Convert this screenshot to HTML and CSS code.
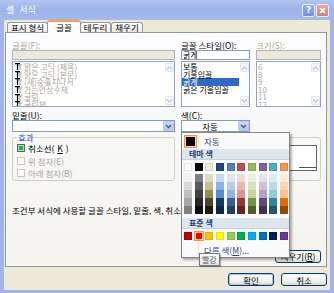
FILE: index.html
```html
<!DOCTYPE html>
<html>
<head>
    <meta charset="utf-8">
    <title>셀 서식</title>
    <link rel="stylesheet" href="styles.css">
</head>
<body>
    <div class="window">
        <div class="titlebar">
            <span class="title">셀 서식</span>
            <span class="tb-btn help">?</span>
            <span class="tb-btn close">
                <svg width="7" height="7" viewBox="0 0 7 7"><path d="M1,1 L6,6 M6,1 L1,6" stroke="#fff" stroke-width="1.6" /></svg>
            </span>
        </div>

        <div class="frame">
            <div class="tabs">
                <div class="tab">표시 형식</div>
                <div class="tab active">글꼴</div>
                <div class="tab">테두리</div>
                <div class="tab">채우기</div>
            </div>

            <div class="panel">
                <div class="fields">
                    <div class="label off">글꼴(F):</div>
                    <div class="label">글꼴 스타일(<u>O</u>):</div>
                    <div class="label off">크기(S):</div>

                    <div class="textbox off"></div>
                    <div class="textbox">굵게</div>
                    <div class="textbox off"></div>

                    <!-- font list (disabled) -->
                    <div class="listbox">
                        <div class="items off fonts">
                            <div class="item"><svg class="tt" width="7" height="7" viewBox="0 0 7 7"><path d="M3,1.5 h4 v1 h-1.5 v4.5 h-1 v-4.5 h-1.5z" fill="#9a9a9a" /><path d="M0,0 h5 v1.2 h-1.9 v5.8 h-1.2 v-5.8 h-1.9z" fill="#000" /></svg>맑은 고딕 (제목)</div>
                            <div class="item"><svg class="tt" width="7" height="7" viewBox="0 0 7 7"><path d="M3,1.5 h4 v1 h-1.5 v4.5 h-1 v-4.5 h-1.5z" fill="#9a9a9a" /><path d="M0,0 h5 v1.2 h-1.9 v5.8 h-1.2 v-5.8 h-1.9z" fill="#000" /></svg>맑은 고딕 (본문)</div>
                            <div class="item"><svg class="tt" width="7" height="7" viewBox="0 0 7 7"><path d="M3,1.5 h4 v1 h-1.5 v4.5 h-1 v-4.5 h-1.5z" fill="#9a9a9a" /><path d="M0,0 h5 v1.2 h-1.9 v5.8 h-1.2 v-5.8 h-1.9z" fill="#000" /></svg>(새)숭홀지나서</div>
                            <div class="item"><svg class="tt" width="7" height="7" viewBox="0 0 7 7"><path d="M3,1.5 h4 v1 h-1.5 v4.5 h-1 v-4.5 h-1.5z" fill="#9a9a9a" /><path d="M0,0 h5 v1.2 h-1.9 v5.8 h-1.2 v-5.8 h-1.9z" fill="#000" /></svg>가는안상수체</div>
                            <div class="item"><svg class="tt" width="7" height="7" viewBox="0 0 7 7"><path d="M3,1.5 h4 v1 h-1.5 v4.5 h-1 v-4.5 h-1.5z" fill="#9a9a9a" /><path d="M0,0 h5 v1.2 h-1.9 v5.8 h-1.2 v-5.8 h-1.9z" fill="#000" /></svg>굴림</div>
                            <div class="item"><svg class="tt" width="7" height="7" viewBox="0 0 7 7"><path d="M3,1.5 h4 v1 h-1.5 v4.5 h-1 v-4.5 h-1.5z" fill="#9a9a9a" /><path d="M0,0 h5 v1.2 h-1.9 v5.8 h-1.2 v-5.8 h-1.9z" fill="#000" /></svg>굴림체</div>
                        </div>
                        <div class="scroll">
                            <span class="sbtn"><svg width="7" height="4" viewBox="0 0 7 4"><path d="M1,3.5 L3.5,1 L6,3.5" stroke="#c3c9d6" stroke-width="1.3" fill="none" /></svg></span>
                            <span class="sbtn"><svg width="7" height="4" viewBox="0 0 7 4"><path d="M1,0.5 L3.5,3 L6,0.5" stroke="#c3c9d6" stroke-width="1.3" fill="none" /></svg></span>
                        </div>
                    </div>

                    <!-- style list -->
                    <div class="listbox">
                        <div class="items">
                            <div class="item">보통</div>
                            <div class="item">기울임꼴</div>
                            <div class="item selected">굵게</div>
                            <div class="item">굵은 기울임꼴</div>
                        </div>
                        <div class="scroll">
                            <span class="sbtn"><svg width="7" height="4" viewBox="0 0 7 4"><path d="M1,3.5 L3.5,1 L6,3.5" stroke="#c3c9d6" stroke-width="1.3" fill="none" /></svg></span>
                            <span class="sbtn"><svg width="7" height="4" viewBox="0 0 7 4"><path d="M1,0.5 L3.5,3 L6,0.5" stroke="#c3c9d6" stroke-width="1.3" fill="none" /></svg></span>
                        </div>
                    </div>

                    <!-- size list (disabled) -->
                    <div class="listbox">
                        <div class="items off">
                            <div class="item">6</div>
                            <div class="item">8</div>
                            <div class="item">9</div>
                            <div class="item">10</div>
                            <div class="item">11</div>
                            <div class="item">12</div>
                        </div>
                        <div class="scroll">
                            <span class="sbtn"><svg width="7" height="4" viewBox="0 0 7 4"><path d="M1,3.5 L3.5,1 L6,3.5" stroke="#c3c9d6" stroke-width="1.3" fill="none" /></svg></span>
                            <span class="sbtn"><svg width="7" height="4" viewBox="0 0 7 4"><path d="M1,0.5 L3.5,3 L6,0.5" stroke="#c3c9d6" stroke-width="1.3" fill="none" /></svg></span>
                        </div>
                    </div>

                    <div class="label gap">밑줄(<u>U</u>):</div>
                    <div class="label gap">색(<u>C</u>):</div>
                    <div></div>

                    <div class="combo">
                        <span class="combo-text"></span>
                        <span class="combo-btn"><svg width="7" height="5" viewBox="0 0 7 5"><path d="M1,1 L3.5,3.5 L6,1" stroke="#4d6185" stroke-width="1.5" fill="none" /></svg></span>
                    </div>
                    <div class="combo">
                        <span class="combo-text">자동</span>
                        <span class="combo-btn"><svg width="7" height="5" viewBox="0 0 7 5"><path d="M1,1 L3.5,3.5 L6,1" stroke="#4d6185" stroke-width="1.5" fill="none" /></svg></span>
                    </div>
                    <div></div>

                    <fieldset class="group">
                        <legend>효과</legend>
                        <div class="check"><span class="box on"><span></span></span>취소선(<u>K</u>)</div>
                        <div class="check off"><span class="box"></span>위 첨자(E)</div>
                        <div class="check off"><span class="box"></span>아래 첨자(B)</div>
                    </fieldset>

                    <fieldset class="group preview-group">
                        <legend>미리 보기</legend>
                        <div class="preview">
                            <span class="preview-line"></span>
                            <span class="preview-text">가나다AaBbCc</span>
                            <span class="preview-line"></span>
                        </div>
                    </fieldset>
                </div>

                <p class="note">조건부 서식에 사용할 글꼴 스타일, 밑줄, 색, 취소선을 설정할 수 있습니다.</p>

                <div class="clear-row">
                    <button class="btn">지우기(<u>R</u>)</button>
                </div>
            </div>

            <div class="buttons">
                <button class="btn default">확인</button>
                <button class="btn">취소</button>
            </div>
        </div>

        <!-- color dropdown -->
        <div class="picker">
            <div class="pk-row">
                <span class="pk-gutter"><span class="auto-swatch"></span></span>
                <span class="pk-label">자동</span>
            </div>
            <div class="pk-head">테마 색</div>
            <div class="pk-grid" id="theme-row"></div>
            <div class="pk-grid shades" id="shade-rows"></div>
            <div class="pk-head second">표준 색</div>
            <div class="pk-grid" id="standard-row"></div>
            <div class="pk-row more">
                <span class="pk-gutter"></span>
                <span class="pk-label">다른 색(<u>M</u>)...</span>
            </div>
        </div>

        <div class="tooltip">빨강</div>
    </div>

    <script src="picker.js"></script>
</body>
</html>
```

FILE: styles.css
```css
* {
    box-sizing: border-box;
}

body {
    margin: 0;
    font-family: "Noto Sans CJK KR", "Noto Sans", sans-serif;
    font-size: 8.5px;
    color: #000;
    background: #fff;
}

.window {
    position: relative;
    width: 334px;
    height: 293px;
}

/* title bar (inactive XP) */
.titlebar {
    height: 20px;
    display: flex;
    align-items: center;
    padding: 0 5px 0 6px;
    background: linear-gradient(#b3c5f0, #9cb4ea 45%, #a5baec);
    color: #fff;
}

.title {
    flex: 1;
    font-size: 9px;
    line-height: 10px;
    word-spacing: 3px;
}

.tb-btn {
    width: 13px;
    height: 13px;
    margin-left: 1px;
    border: 1px solid #e8eefc;
    border-radius: 2px;
    display: flex;
    align-items: center;
    justify-content: center;
}

.help {
    background: linear-gradient(#93aff0, #6b8fe5);
    font-family: "DejaVu Sans", sans-serif;
    font-weight: bold;
    font-size: 9px;
    line-height: 9px;
}

.close {
    background: linear-gradient(#e3aaa2, #cf7f74);
}

.frame {
    height: 273px;
    background: #ece9d8;
    border: 4px solid #a1b4e8;
    border-top: 0;
    border-bottom-width: 3px;
    padding: 0 3px 0 1px;
}

/* tabs */
.tabs {
    display: flex;
    align-items: flex-end;
    height: 12px;
    padding-left: 2px;
}

.tab {
    height: 10px;
    padding: 0 3px;
    border: 1px solid #919b9c;
    border-bottom: 0;
    border-radius: 3px 3px 0 0;
    background: linear-gradient(#fff, #ecebe5);
    line-height: 9px;
    white-space: nowrap;
}

.tab.active {
    position: relative;
    z-index: 1;
    height: 13px;
    margin: 0 -1px -1px;
    padding: 0 8px;
    border-top: 2px solid #f3a53d;
    background: #fcfcfe;
    line-height: 11px;
}

.panel {
    height: 235px;
    border: 1px solid #919b9c;
    background: linear-gradient(#fcfcfe, #f4f3ee);
    padding: 7px 5px 0 6px;
}

.fields {
    display: grid;
    grid-template-columns: 163px 69px 65px;
    column-gap: 6px;
}

.label {
    height: 10px;
    line-height: 10px;
    white-space: nowrap;
}

.label.gap {
    margin-top: 3px;
}

.off {
    color: #aca899;
}

.textbox {
    height: 10px;
    border: 1px solid #7f9db9;
    background: #fff;
    padding-left: 1px;
    font-size: 8px;
    line-height: 8px;
}

.textbox.off {
    background: #ece9d8;
    border-color: #a9b3c3;
}

.listbox {
    height: 46px;
    margin-top: 1px;
    border: 1px solid #8fa5c2;
    background: #fff;
    display: flex;
}

.items {
    flex: 1;
    padding-top: 1px;
    overflow: hidden;
}

.item {
    height: 7.6px;
    line-height: 7.6px;
    padding-left: 1px;
    font-size: 8px;
    white-space: nowrap;
    display: flex;
    align-items: center;
}

.item.selected {
    background: #316ac5;
    color: #fff;
}

.fonts .item {
    padding-left: 2px;
}

.tt {
    flex: none;
    margin-right: 2px;
}

.scroll {
    width: 10px;
    padding: 1px 0 1px 1px;
    display: flex;
    flex-direction: column;
    justify-content: space-between;
}

.sbtn {
    height: 9px;
    border: 1px solid #e2e6ef;
    border-radius: 1px;
    background: #f3f5f9;
    display: flex;
    align-items: center;
    justify-content: center;
}

.combo {
    height: 12px;
    border: 1px solid #7f9db9;
    background: #fff;
    display: flex;
}

.combo-text {
    flex: 1;
    text-align: center;
    line-height: 10px;
}

.combo-btn {
    width: 11px;
    margin: 0;
    border: 1px solid #b6c8f3;
    border-radius: 1px;
    background: linear-gradient(#cbd8fb, #b0c5f6);
    display: flex;
    align-items: center;
    justify-content: center;
}

/* group boxes */
.group {
    margin: 0;
    padding: 0 4px;
    border: 1px solid #d0d0bf;
    border-radius: 3px;
    min-width: 0;
}

.group legend {
    padding: 0 1px;
    color: #0046d5;
    line-height: 10px;
}

.preview-group {
    grid-column: 2 / 4;
    padding: 3px 3px 8px;
}

.check {
    height: 12.5px;
    display: flex;
    align-items: center;
    gap: 3px;
    white-space: nowrap;
}

.box {
    width: 8px;
    height: 8px;
    border: 1px solid #cac8bb;
    background: #fff;
    display: flex;
    align-items: center;
    justify-content: center;
}

.box.on {
    border-color: #4d6e80;
    background: linear-gradient(135deg, #dcdcd7, #fff);
}

.box.on span {
    width: 4px;
    height: 4px;
    background: #2fae3f;
    box-shadow: 0 0 0 1px #a9dcae;
}

.preview {
    height: 26px;
    border: 1px solid #666;
    background: #fff;
    display: flex;
    align-items: center;
    justify-content: flex-end;
    padding-top: 13px;
    overflow: hidden;
}

.preview-text {
    font-weight: bold;
    text-decoration: line-through;
    margin: 0 10px 0 2px;
    line-height: 10px;
    white-space: nowrap;
}

.preview-line {
    flex: none;
    width: 17px;
    height: 1px;
    margin-top: 6px;
    background: #555;
}

.note {
    margin: 24px 0 0;
    line-height: 10px;
    white-space: nowrap;
    overflow: hidden;
}

.clear-row {
    display: flex;
    justify-content: flex-end;
    margin-top: 35px;
}

/* XP push buttons */
.btn {
    width: 46px;
    height: 13px;
    padding: 0;
    border: 1px solid #003c74;
    border-radius: 3px;
    background: linear-gradient(#fff, #f0efea 70%, #d9d4c6);
    font-family: inherit;
    font-size: 8.5px;
    line-height: 10px;
    color: #000;
}

.btn.default {
    box-shadow: inset 0 0 0 1px #a8c4f0;
}

.buttons {
    display: flex;
    justify-content: flex-end;
    gap: 7px;
    margin-top: 6px;
}

/* colour picker dropdown */
.picker {
    position: absolute;
    left: 181px;
    top: 132px;
    width: 109px;
    height: 126px;
    border: 1px solid #868686;
    background: #fafafa;
    box-shadow: 2px 2px 2px rgba(0,0,0,0.3);
}

.pk-row {
    height: 16px;
    display: flex;
    align-items: center;
}

.pk-gutter {
    width: 17px;
    height: 100%;
    border-right: 1px solid #e2e3e3;
    display: flex;
    align-items: center;
    justify-content: center;
}

.auto-swatch {
    width: 13px;
    height: 13px;
    border: 1px solid #f29536;
    background: #000;
    box-shadow: inset 0 0 0 1px #ffd28f;
}

.pk-label {
    padding-left: 5px;
    color: #32477a;
    line-height: 10px;
    white-space: nowrap;
}

.pk-row.more {
    height: 15px;
    margin-top: 2px;
}

.pk-head {
    height: 11px;
    padding-left: 7px;
    background: #dde5ee;
    border-bottom: 1px solid #c5d0dd;
    color: #1f3a6e;
    font-weight: bold;
    font-size: 8px;
    line-height: 10px;
}

.pk-head.second {
    margin-top: 4px;
}

.pk-grid {
    display: grid;
    grid-template-columns: repeat(10, 8px);
    column-gap: 2.67px;
    padding-left: 2px;
    margin-top: 3px;
}

.swatch {
    height: 8px;
    box-shadow: inset 0 0 0 1px rgba(0,0,0,0.1);
}

.shade-col .swatch {
    box-shadow: none;
}

.swatch.hover {
    outline: 1px solid #f29536;
    box-shadow: inset 0 0 0 1px #ffd28f;
}

.tooltip {
    position: absolute;
    left: 199px;
    top: 253px;
    height: 13px;
    padding: 0 2px;
    border: 1px solid #767676;
    background: linear-gradient(#fff, #e4e5f0);
    color: #575757;
    font-size: 8px;
    line-height: 11px;
    box-shadow: 1px 1px 1px rgba(0,0,0,0.25);
}
```

FILE: picker.js
```js
// Office 2007 palette
const themeColors = ['#ffffff', '#000000', '#eeece1', '#1f497d', '#4f81bd', '#c0504d', '#9bbb59', '#8064a2', '#4bacc6', '#f79646'];

const shades = [
    ['#f2f2f2', '#d9d9d9', '#bfbfbf', '#a6a6a6', '#808080'],
    ['#7f7f7f', '#595959', '#404040', '#262626', '#0d0d0d'],
    ['#ddd9c3', '#c4bd97', '#948a54', '#4a452a', '#1d1b10'],
    ['#c6d9f1', '#8db3e2', '#548dd4', '#17365d', '#0f243e'],
    ['#dbe5f1', '#b8cce4', '#95b3d7', '#366092', '#244061'],
    ['#f2dcdb', '#e6b9b8', '#d99694', '#953734', '#632423'],
    ['#ebf1dd', '#d7e3bc', '#c3d69b', '#76923c', '#4f6128'],
    ['#e5e0ec', '#ccc1d9', '#b2a2c7', '#5f497a', '#3f3151'],
    ['#dbeef3', '#b7dde8', '#92cddc', '#31859b', '#205867'],
    ['#fdeada', '#fbd5b5', '#fac08f', '#e36c09', '#974806']
];

const standardColors = ['#c00000', '#ff0000', '#ffc000', '#ffff00', '#92d050', '#00b050', '#00b0f0', '#0070c0', '#002060', '#7030a0'];

const hovered = '#ff0000';

function makeSwatch(color) {
    const s = document.createElement('div');
    s.className = 'swatch';
    s.style.background = color;
    if (color === hovered) s.classList.add('hover');
    return s;
}

const themeRow = document.getElementById('theme-row');
themeColors.forEach(c => themeRow.appendChild(makeSwatch(c)));

const shadeRows = document.getElementById('shade-rows');
shades.forEach(col => {
    const wrap = document.createElement('div');
    wrap.className = 'shade-col';
    col.forEach(c => wrap.appendChild(makeSwatch(c)));
    shadeRows.appendChild(wrap);
});

const standardRow = document.getElementById('standard-row');
standardColors.forEach(c => standardRow.appendChild(makeSwatch(c)));
```
